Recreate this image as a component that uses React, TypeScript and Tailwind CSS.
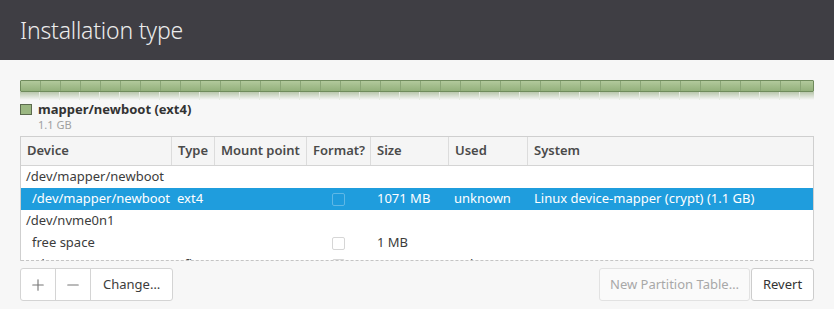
import { Plus, Minus } from 'lucide-react';

const font = { fontFamily: '"Noto Sans", "DejaVu Sans", sans-serif' };

const cols = [
  { label: 'Device', w: 'w-[151px]' },
  { label: 'Type', w: 'w-[43px]' },
  { label: 'Mount point', w: 'w-[92px]' },
  { label: 'Format?', w: 'w-[64px]' },
  { label: 'Size', w: 'w-[78px]' },
  { label: 'Used', w: 'w-[79px]' },
  { label: 'System', w: 'flex-1' },
];

interface Row {
  device: string;
  indent?: boolean;
  type?: string;
  format?: boolean;
  size?: string;
  used?: string;
  system?: string;
  selected?: boolean;
}

const rows: Row[] = [
  { device: '/dev/mapper/newboot' },
  {
    device: '/dev/mapper/newboot',
    indent: true,
    type: 'ext4',
    format: true,
    size: '1071 MB',
    used: 'unknown',
    system: 'Linux device-mapper (crypt) (1.1 GB)',
    selected: true,
  },
  { device: '/dev/nvme0n1' },
  { device: 'free space', indent: true, format: true, size: '1 MB' },
  { device: '/dev/nvme0n1p1', indent: true, type: 'efi', format: true, size: '536 MB', used: 'unknown' },
];

function Checkbox({ selected }: { selected?: boolean }) {
  return (
    <div
      className={
        selected
          ? 'h-[13px] w-[13px] rounded-[2px] border border-[#5fb8e6] bg-[#1f9bdc]'
          : 'h-[13px] w-[13px] rounded-[2px] border border-[#d6d6d6] bg-white'
      }
    />
  );
}

function TableRow({ r }: { r: Row }) {
  return (
    <div
      className={
        'flex h-[22px] items-center text-[13px] ' +
        (r.selected ? 'bg-[#1f9ddd] text-white' : 'text-[#3c3c3c]')
      }
    >
      <div className={'w-[151px] shrink-0 whitespace-nowrap ' + (r.indent ? 'pl-[11px]' : 'pl-[5px]')}>
        {r.device}
      </div>
      <div className="w-[43px] shrink-0 pl-[5px]">{r.type}</div>
      <div className="w-[92px] shrink-0" />
      <div className="flex w-[64px] shrink-0 pl-[25px]">{r.format && <Checkbox selected={r.selected} />}</div>
      <div className="w-[78px] shrink-0 pl-[6px] whitespace-nowrap">{r.size}</div>
      <div className="w-[79px] shrink-0 pl-[5px]">{r.used}</div>
      <div className="flex-1 pl-[6px] whitespace-nowrap">{r.system}</div>
    </div>
  );
}

export default function App() {
  return (
    <div className="h-[309px] w-[834px] overflow-hidden bg-[#f7f7f7]" style={font}>
      {/* Title bar */}
      <div className="flex h-[60px] items-center bg-[#3f3e44] px-[20px]">
        <h1 className="text-[23px] font-light tracking-[-0.2px] text-[#ececec]">Installation type</h1>
      </div>

      <div className="px-[20px] pt-[20px]">
        {/* Partition bar */}
        <div className="h-[12px] w-[794px] overflow-hidden rounded-[1px] border border-[#6f8b5c] bg-gradient-to-b from-[#b2c99c] to-[#93b07b]">
          <div className="flex h-full">
            {Array.from({ length: 40 }).map((_, i) => (
              <div key={i} className="h-full w-[20px] shrink-0 border-r border-[#8aa576]" />
            ))}
          </div>
        </div>
        <div className="h-[8px] w-[794px] overflow-hidden bg-gradient-to-b from-[#b9c7ac] to-[#f7f7f7]">
          <div className="flex h-full">
            {Array.from({ length: 40 }).map((_, i) => (
              <div key={i} className="h-full w-[20px] shrink-0 border-r border-[#e6ebe1]" />
            ))}
          </div>
        </div>

        {/* Legend */}
        <div className="mt-[3px] flex items-start gap-[6px]">
          <div className="mt-[1px] h-[11px] w-[12px] border border-[#5c6b4f] bg-[#9bb782]" />
          <div className="leading-none">
            <div className="text-[13px] font-bold text-[#333]">mapper/newboot (ext4)</div>
            <div className="mt-[3px] text-[11px] text-[#a0a0a0]">1.1 GB</div>
          </div>
        </div>

        {/* Partition table */}
        <div className="mt-[6px] h-[124px] w-[794px] overflow-hidden border border-b-0 border-[#cfcfcf] bg-white">
          <div className="flex h-[29px] items-center border-b border-[#d4d4d4] bg-[#f5f5f5] text-[13px] font-semibold text-[#4a4a4a]">
            {cols.map((c, i) => (
              <div
                key={c.label}
                className={
                  c.w +
                  ' flex h-full shrink-0 items-center pl-[6px] ' +
                  (i < cols.length - 1 ? 'border-r border-[#dcdcdc]' : '')
                }
              >
                {c.label}
              </div>
            ))}
          </div>
          {rows.map((r, i) => (
            <TableRow key={i} r={r} />
          ))}
        </div>
        <div className="w-[794px] border-x border-[#cfcfcf]">
          <div className="h-[1px] w-full border-t border-dashed border-[#c4c4c4]" />
        </div>

        {/* Buttons */}
        <div className="mt-[7px] flex w-[794px] justify-between">
          <div className="flex h-[33px] overflow-hidden rounded-[3px] border border-[#d4d4d4] bg-white text-[13px] text-[#3c3c3c]">
            <button className="flex w-[35px] items-center justify-center border-r border-[#d4d4d4] text-[#777]">
              <Plus size={18} strokeWidth={1.5} />
            </button>
            <button className="flex w-[35px] items-center justify-center border-r border-[#d4d4d4] text-[#777]">
              <Minus size={18} strokeWidth={1.5} />
            </button>
            <button className="px-[12px]">Change…</button>
          </div>
          <div className="flex h-[33px] gap-[1px] text-[13px]">
            <button className="w-[151px] rounded-[3px] border border-[#e2e2e2] bg-[#fafafa] text-[#a8a8a8]">
              New Partition Table…
            </button>
            <button className="w-[63px] rounded-[3px] border border-[#cdcdcd] bg-white text-[#333]">Revert</button>
          </div>
        </div>
      </div>
    </div>
  );
}
